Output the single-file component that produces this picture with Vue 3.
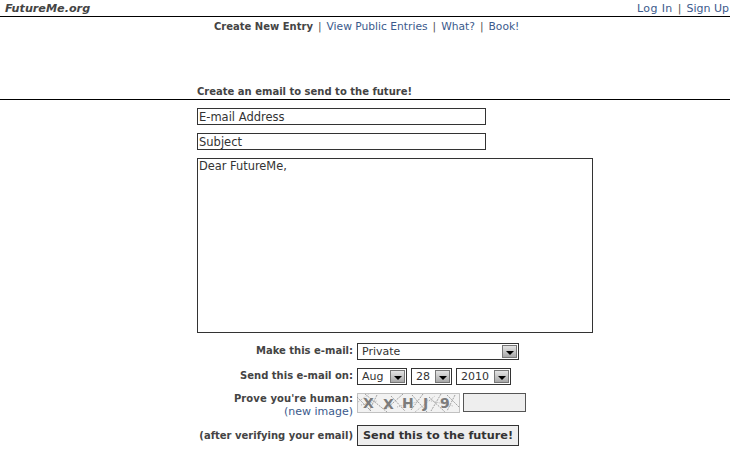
<template>
  <div class="page">
    <!-- Top bar -->
    <div class="topbar">
      <span class="logo">FutureMe.org</span>
      <div class="account">
        <a class="login">Log In</a><span class="sep">|</span><a>Sign Up</a>
      </div>
    </div>

    <!-- Nav -->
    <div class="nav">
      <b>Create New Entry</b><span class="sep">|</span><a>View Public Entries</a><span class="sep">|</span><a>What?</a><span class="sep">|</span><a>Book!</a>
    </div>

    <div class="heading-row">
      <div class="column">Create an email to send to the future!</div>
    </div>

    <form class="column form" @submit.prevent>
      <div class="fake-input">E-mail Address</div>
      <div class="fake-input">Subject</div>
      <div class="fake-area">Dear FutureMe,</div>

      <div class="row first">
        <div class="label">Make this e-mail:</div>
        <div class="select wide">
          <span class="value">Private</span>
          <span class="arrow"><i></i></span>
        </div>
      </div>

      <div class="row">
        <div class="label">Send this e-mail on:</div>
        <div class="dates">
          <div v-for="d in dates" :key="d.value" class="select" :style="{ width: d.width + 'px' }">
            <span class="value">{{ d.value }}</span>
            <span class="arrow"><i></i></span>
          </div>
        </div>
      </div>

      <div class="row captcha-row">
        <div class="label">
          <span class="prove">Prove you're human:</span>
          <a class="new-image">(new image)</a>
        </div>
        <div class="captcha">
          <svg class="captcha-img" width="103" height="20" viewBox="0 0 103 20">
            <rect x="0.5" y="0.5" width="102" height="19" fill="#f2f2f2" stroke="#8a8a8a" stroke-dasharray="1 1" />
            <path d="M0 4L14 18M8 1L30 19M20 2L12 18M34 3L48 18M46 1L28 17M55 2L70 19M66 1L54 17M72 4L88 19M84 1L74 18M90 2L102 14M98 2L90 18" stroke="#a0a0a0" fill="none" stroke-dasharray="2 1" />
            <path d="M4 12L20 8M40 14L60 9M70 7L96 13M1 9L12 1M58 19L78 3" stroke="#b4b4b4" fill="none" stroke-dasharray="1 1" />
            <text x="6" y="15" class="code">X</text>
            <text x="26" y="16" class="code">X</text>
            <text x="45" y="15" class="code">H</text>
            <text x="66" y="15" class="code">J</text>
            <text x="83" y="15" class="code">9</text>
          </svg>
          <div class="captcha-input"></div>
        </div>
      </div>

      <div class="row submit-row">
        <div class="label">(after verifying your email)</div>
        <button type="submit" class="send">Send this to the future!</button>
      </div>
    </form>
  </div>
</template>

<script setup>
const dates = [
  { value: 'Aug', width: 48 },
  { value: '28', width: 39 },
  { value: '2010', width: 53 }
]
</script>

<style>
html, body {
  background: #fff;
}
</style>

<style scoped>
.page {
  width: 730px;
  height: 472px;
  overflow: hidden;
  background: #fff;
  font-family: Verdana, "DejaVu Sans", sans-serif;
  font-size: 11px;
  color: #444;
}

a {
  color: #3b5a8c;
}

.sep {
  color: #555;
  margin: 0 5px;
}

.login {
  letter-spacing: 0.4px;
}

/* Top bar */
.topbar {
  height: 16px;
  border-bottom: 1px solid #000;
  display: flex;
  justify-content: space-between;
  align-items: center;
  padding: 0 1px 0 5px;
}

.logo {
  font-size: 11.2px;
  font-weight: bold;
  font-style: italic;
  color: #444;
}

/* Nav */
.nav {
  height: 18px;
  padding-top: 1px;
  line-height: 18px;
  padding-left: 214px;
  font-size: 10.7px;
}

.nav b {
  font-size: 10px;
  color: #444;
}

.heading-row {
  margin-top: 46px;
  height: 17px;
  border-bottom: 1px solid #000;
  font-size: 10px;
  font-weight: bold;
  line-height: 19px;
}

.column {
  margin-left: 197px;
}

/* Form */
.form {
  width: 396px;
  padding-top: 8px;
}

.fake-input {
  width: 286px;
  height: 15px;
  border: 1px solid #333;
  margin-bottom: 8px;
  padding-left: 1px;
  line-height: 17px;
  font-size: 11.5px;
  color: #333;
}

.fake-area {
  height: 173px;
  border: 1px solid #333;
  padding: 0 1px;
  line-height: 14px;
  font-size: 11.4px;
  color: #333;
}

.row {
  display: flex;
  gap: 4px;
  margin-top: 9px;
  height: 16px;
}

.row.first {
  margin-top: 10px;
}

.label {
  width: 156px;
  flex-shrink: 0;
  text-align: right;
  white-space: nowrap;
  font-size: 10px;
  font-weight: bold;
  line-height: 16px;
  color: #444;
}

.prove {
  letter-spacing: 0.1px;
}

.select {
  height: 15px;
  border: 1px solid #333;
  display: flex;
  justify-content: space-between;
  background: #fff;
}

.select.wide {
  width: 160px;
}

.value {
  padding-left: 4px;
  line-height: 15px;
  color: #333;
}

.arrow {
  width: 15px;
  margin: 1px;
  background: linear-gradient(#e4e4e4, #a8a8a8);
  border: 1px solid #777;
  box-sizing: border-box;
  display: flex;
  align-items: center;
  justify-content: center;
}

.arrow i {
  width: 0;
  height: 0;
  border-left: 4px solid transparent;
  border-right: 4px solid transparent;
  border-top: 4px solid #000;
  margin-top: 2px;
}

.dates {
  display: flex;
  gap: 4px;
}

.captcha-row {
  margin-top: 8px;
  height: 26px;
}

.captcha-row .label {
  line-height: 13px;
}

.new-image {
  display: block;
  font-size: 11px;
  font-weight: normal;
  color: #3b5a8c;
}

.captcha {
  display: flex;
  gap: 3px;
  padding-top: 1px;
}

.captcha-img {
  display: block;
}

.code {
  font-family: "DejaVu Sans", sans-serif;
  font-size: 14px;
  font-weight: bold;
  fill: #7c7c7c;
}

.captcha-input {
  width: 61px;
  height: 17px;
  border: 1px solid #555;
  background: #eee;
}

.submit-row {
  margin-top: 7px;
  height: 21px;
  align-items: center;
}

.send {
  height: 21px;
  width: 162px;
  padding: 0;
  border: 1px solid #333;
  background: #eee;
  font-family: inherit;
  font-size: 11.25px;
  font-weight: bold;
  color: #333;
}
</style>
